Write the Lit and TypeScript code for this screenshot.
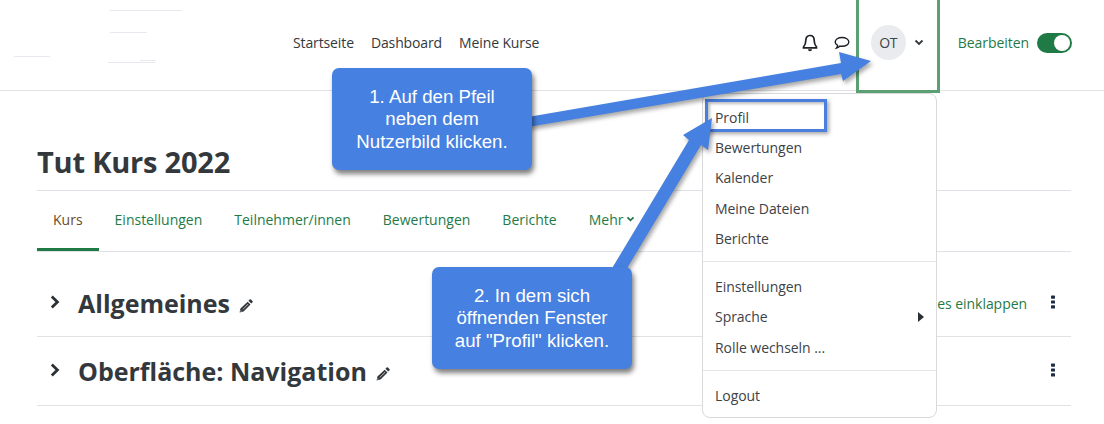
import { LitElement, html, css, svg } from 'lit';
import { customElement } from 'lit/decorators.js';

const pencil = html`<svg class="pencil" viewBox="0 0 14 14" width="14" height="14">
  <path fill="#33383d" d="M10.600.600a1 1 0 0 1 1.400 0l1.400 1.400a1 1 0 0 1 0 1.400l-1.200 1.200-2.800-2.800zM8.700 2.700l2.800 2.800-7 7-3.900.900.800-3.900z"/>
  <path fill="#fff" d="M8.900 4.900l.4.400-5.300 5.300-.4-.4z"/>
  <path fill="#fff" d="M1.700 11.200l1.100 1.100-1.400.300z"/>
</svg>`;

const dots = html`<svg class="dots" viewBox="0 0 4 14" width="4" height="14">
  <rect x="0" y="0.500" width="4" height="3.200" rx=".6"/><rect x="0" y="5.400" width="4" height="3.200" rx=".6"/><rect x="0" y="10.300" width="4" height="3.200" rx=".6"/>
</svg>`;

const chevronRight = html`<svg class="section-toggle" viewBox="0 0 10 14" width="10" height="14">
  <path d="M1.800 1.600l5.600 5.400-5.600 5.400" fill="none" stroke="#2b3035" stroke-width="2.800"/>
</svg>`;

@customElement('app-root')
class AppRoot extends LitElement {
  static styles = css`
    :host {
      display: block;
      position: relative;
      width: 1104px;
      height: 424px;
      overflow: hidden;
      background: #fff;
      font-family: 'Open Sans', 'Noto Sans', sans-serif;
      font-size: 14px;
      color: #3d4247;
    }

    .navbar {
      display: flex;
      align-items: center;
      height: 91px;
      box-sizing: border-box;
      padding: 0 32px 5px 293px;
      border-bottom: 1px solid #e2e2e6;
    }

    .logo-traces {
      position: absolute;
      left: 0;
      top: 0;
    }

    .nav-links {
      display: flex;
      gap: 17px;
      color: #33383d;
      letter-spacing: -0.12px;
    }

    .nav-right {
      display: flex;
      align-items: center;
      margin-left: auto;
    }

    .bell {
      margin-right: 16px;
    }

    .user {
      display: flex;
      align-items: center;
      margin-right: 34px;
      margin-left: 21px;
    }

    .avatar {
      display: flex;
      align-items: center;
      justify-content: center;
      width: 35px;
      height: 35px;
      margin-right: 8px;
      border-radius: 50%;
      background: #e9ebee;
      letter-spacing: -0.25px;
    }

    .edit {
      color: #1f7a46;
      letter-spacing: -0.05px;
      margin-right: 8px;
    }

    .switch {
      display: flex;
      justify-content: flex-end;
      align-items: center;
      width: 35px;
      height: 20px;
      box-sizing: border-box;
      padding: 2px;
      border-radius: 10px;
      background: #1f7a46;
    }

    .switch i {
      width: 16px;
      height: 16px;
      border-radius: 50%;
      background: #fff;
    }

    .page {
      padding: 0 33px 0 37px;
    }

    h1 {
      margin: 0;
      padding: 51px 0 9px;
      font-size: 29px;
      line-height: 39px;
      font-weight: 700;
      color: #33383d;
      letter-spacing: -0.2px;
    }

    .tabs {
      display: flex;
      height: 62px;
      box-sizing: border-box;
      border-top: 1px solid #dee2e6;
      border-bottom: 1px solid #dee2e6;
      color: #1f7a46;
    }

    .tab {
      display: flex;
      align-items: center;
      gap: 3px;
      box-sizing: border-box;
      height: 60px;
      padding: 0 16px 3px;
      letter-spacing: 0;
    }

    .tab.active {
      color: #6a4a2a;
      border-bottom: 3px solid #1f7a46;
      padding-bottom: 0;
    }

    .section {
      display: flex;
      align-items: center;
      box-sizing: border-box;
      border-bottom: 1px solid #e2e2e6;
    }

    .section.first {
      height: 85px;
      padding-top: 18px;
    }

    .section.second {
      height: 69px;
    }

    .section-toggle {
      margin: 0 18px 3px 13px;
    }

    h2 {
      margin: 0 9px 0 0;
      font-size: 25px;
      line-height: 36px;
      font-weight: 700;
      color: #33383d;
      letter-spacing: 0;
    }

    .pencil {
      margin-top: 6px;
    }

    .collapse {
      margin-left: auto;
      margin-right: 24px;
      color: #1f7a46;
      letter-spacing: -0.05px;
    }

    .dots {
      fill: #1d2d4a;
      margin-left: auto;
      margin: 0 16px 3px auto;
    }

    .collapse + .dots {
      margin-left: 0;
    }

    .menu {
      position: absolute;
      left: 702px;
      top: 93px;
      width: 235px;
      height: 325px;
      box-sizing: border-box;
      padding: 8px 0;
      background: #fff;
      border: 1px solid #d8d9db;
      border-radius: 8px;
      color: #3d4247;
      letter-spacing: -0.05px;
    }

    .item {
      display: flex;
      align-items: center;
      justify-content: space-between;
      height: 30.300px;
      padding: 0 12px;
    }

    .menu hr {
      margin: 8px 0 9px;
      border: 0;
      border-top: 1px solid #e6e6e8;
    }

    .caret {
      width: 0;
      height: 0;
      border-left: 6px solid #2b2f33;
      border-top: 5px solid transparent;
      border-bottom: 5px solid transparent;
    }

    .focus {
      position: absolute;
      left: 705px;
      top: 99px;
      width: 122px;
      height: 33px;
      box-sizing: border-box;
      border: 3px solid #4a7fde;
      box-shadow:
        2px 2px 4px rgba(0, 0, 0, 0.35),
        inset 2px 2px 3px rgba(0, 0, 0, 0.25);
    }

    .user-mark {
      position: absolute;
      left: 856px;
      top: -4px;
      width: 84px;
      height: 97px;
      box-sizing: border-box;
      border: 3px solid #5b9f72;
    }

    .arrows {
      position: absolute;
      left: 0;
      top: 0;
      filter: drop-shadow(2px 3px 2px rgba(0, 0, 0, 0.35));
    }

    .callout {
      position: absolute;
      display: flex;
      align-items: center;
      justify-content: center;
      box-sizing: border-box;
      width: 200px;
      height: 102px;
      padding-top: 1px;
      border-radius: 7px;
      background: #4680e0;
      box-shadow: 2px 4px 5px rgba(0, 0, 0, 0.5);
      color: #fff;
      font-family: 'Liberation Sans', Arial, sans-serif;
      font-size: 18.670px;
      line-height: 22.500px;
      text-align: center;
    }

    .callout.one {
      left: 332px;
      top: 68px;
    }

    .callout.two {
      left: 432px;
      top: 267px;
    }
  `;

  render() {
    return html`
      <div class="navbar">
        <svg class="logo-traces" width="240" height="72" viewBox="0 0 240 72">
          <path d="M110 10.500h72M110 32.500h37M14 56.500h36M108 62.500h47M140 60.500h16" stroke="#e8e8ee" fill="none"/>
        </svg>
        <nav class="nav-links">
          <span>Startseite</span><span>Dashboard</span><span>Meine Kurse</span>
        </nav>
        <div class="nav-right">
          <svg class="bell" viewBox="0 0 16 18" width="16" height="18">
            <path d="M8 1.500c-3 0-4.200 2.300-4.200 5 0 3.400-1 5-2.300 6.500v.8h13v-.8c-1.300-1.500-2.300-3.100-2.300-6.500 0-2.700-1.200-5-4.200-5z" fill="none" stroke="#1d2125" stroke-width="1.700"/>
            <path d="M6 15.200a2 2 0 0 0 4 0z" fill="#1d2125"/>
          </svg>
          <svg viewBox="0 0 16 16" width="16" height="16">
            <path d="M8 2.500c3.800 0 6.800 1.900 6.800 4.400S11.800 11.300 8 11.300c-.8 0-1.400 0-2-.2-.8.800-2 1.700-3.600 2 .7-.8 1.100-1.700 1.200-2.700C2.100 9.600 1.200 8.300 1.200 6.900 1.200 4.400 4.200 2.500 8 2.500z" fill="none" stroke="#1d2125" stroke-width="1.400"/>
          </svg>
          <div class="user">
            <div class="avatar">OT</div>
            <svg viewBox="0 0 10 8" width="10" height="8">
              <path d="M1.500 1.500L5 5l3.500-3.500" fill="none" stroke="#33383d" stroke-width="1.800"/>
            </svg>
          </div>
          <span class="edit">Bearbeiten</span>
          <div class="switch"><i></i></div>
        </div>
      </div>

      <main class="page">
        <h1>Tut Kurs 2022</h1>
        <div class="tabs">
          <span class="tab active">Kurs</span>
          <span class="tab">Einstellungen</span>
          <span class="tab">Teilnehmer/innen</span>
          <span class="tab">Bewertungen</span>
          <span class="tab">Berichte</span>
          <span class="tab">
            Mehr
            <svg viewBox="0 0 10 8" width="9" height="7">
              <path d="M1.500 1.500L5 5l3.500-3.500" fill="none" stroke="#1f7a46" stroke-width="2"/>
            </svg>
          </span>
        </div>
        <div class="section first">
          ${chevronRight}
          <h2>Allgemeines</h2>
          ${pencil}
          <span class="collapse">Alles einklappen</span>
          ${dots}
        </div>
        <div class="section second">
          ${chevronRight}
          <h2>Oberfläche: Navigation</h2>
          ${pencil}
          ${dots}
        </div>
      </main>

      <div class="menu">
        <div class="item">Profil</div>
        <div class="item">Bewertungen</div>
        <div class="item">Kalender</div>
        <div class="item">Meine Dateien</div>
        <div class="item">Berichte</div>
        <hr />
        <div class="item">Einstellungen</div>
        <div class="item">Sprache<span class="caret"></span></div>
        <div class="item">Rolle wechseln ...</div>
        <hr />
        <div class="item">Logout</div>
      </div>

      <div class="user-mark"></div>
      <div class="focus"></div>

      <svg class="arrows" width="1104" height="424" viewBox="0 0 1104 424">
        ${svg`<polygon fill="#4680e0" points="528,117 841,63 839,52 871,61 843,81 841,74 528,127"/>
        <polygon fill="#4680e0" points="611,270 689,140 683,135 712,118 708,150 701,145 626,270"/>`}
      </svg>

      <div class="callout one">1. Auf den Pfeil<br />neben dem<br />Nutzerbild klicken.</div>
      <div class="callout two">2. In dem sich<br />öffnenden Fenster<br />auf "Profil" klicken.</div>
    `;
  }
}
